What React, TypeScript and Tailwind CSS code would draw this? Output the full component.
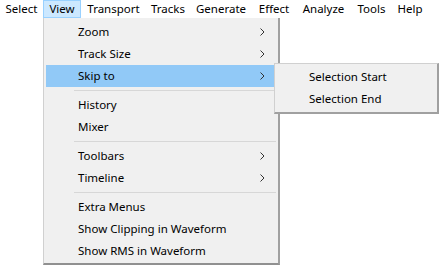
import React from "react";

type Entry = { label: string; sub?: boolean; active?: boolean } | "sep";

const topMenus: { label: string; w: string }[] = [
  { label: "Select", w: "w-[43px]" },
  { label: "View", w: "w-[38px]" },
  { label: "Transport", w: "w-[65px]" },
  { label: "Tracks", w: "w-[44px]" },
  { label: "Generate", w: "w-[62px]" },
  { label: "Effect", w: "w-[44px]" },
  { label: "Analyze", w: "w-[55px]" },
  { label: "Tools", w: "w-[41px]" },
  { label: "Help", w: "w-[36px]" },
];

const viewItems: Entry[] = [
  { label: "Zoom", sub: true },
  { label: "Track Size", sub: true },
  { label: "Skip to", sub: true, active: true },
  "sep",
  { label: "History" },
  { label: "Mixer" },
  "sep",
  { label: "Toolbars", sub: true },
  { label: "Timeline", sub: true },
  "sep",
  { label: "Extra Menus" },
  { label: "Show Clipping in Waveform" },
  { label: "Show RMS in Waveform" },
];

const Chevron = () => (
  <svg width="5" height="8" viewBox="0 0 5 8" fill="none" stroke="#333" strokeWidth="1">
    <polyline points="0.5,0.5 4,4 0.5,7.5" />
  </svg>
);

export default function App() {
  return (
    <div
      className="relative w-[440px] h-[266px] bg-white overflow-hidden text-[11.5px] text-black"
      style={{ fontFamily: '"Noto Sans", "Liberation Sans", sans-serif' }}
    >
      {/* menu bar */}
      <div className="flex h-[18px] items-center bg-white">
        {topMenus.map((m) => (
          <div
            key={m.label}
            className={`${m.w} h-[18px] shrink-0 flex items-center justify-center leading-none whitespace-nowrap ${
              m.label === "View" ? "bg-[#cce8ff] border border-[#99d1ff]" : "border border-transparent"
            }`}
          >
            {m.label}
          </div>
        ))}
      </div>

      {/* View dropdown */}
      <div className="absolute left-[43px] top-[18px] w-[237px] bg-[#f0f0f0] border-l border-[#d0d0d0] border-r-2 border-r-[#a0a0a0] border-b-2 border-b-[#909090] pt-[3px] pb-[1px] pl-[2px] pr-[1px]">
        {viewItems.map((it, i) =>
          it === "sep" ? (
            <div key={i} className="h-[7px] flex items-center pl-[28px] pr-[1px]">
              <div className="h-px w-full bg-[#d7d7d7]" />
            </div>
          ) : (
            <div
              key={i}
              className={`h-[22px] flex items-center justify-between pl-[32px] pr-[12px] ${
                it.active ? "bg-[#91c9f7]" : ""
              }`}
            >
              <span>{it.label}</span>
              {it.sub && <Chevron />}
            </div>
          )
        )}
      </div>

      {/* Skip to submenu */}
      <div className="absolute left-[274px] top-[63px] w-[165px] bg-[#f0f0f0] border border-[#d0d0d0] border-r-2 border-r-[#a0a0a0] border-b-2 border-b-[#a0a0a0] py-[2px]">
        <div className="h-[22px] flex items-center pl-[34px]">Selection Start</div>
        <div className="h-[22px] flex items-center pl-[34px]">Selection End</div>
      </div>
    </div>
  );
}
